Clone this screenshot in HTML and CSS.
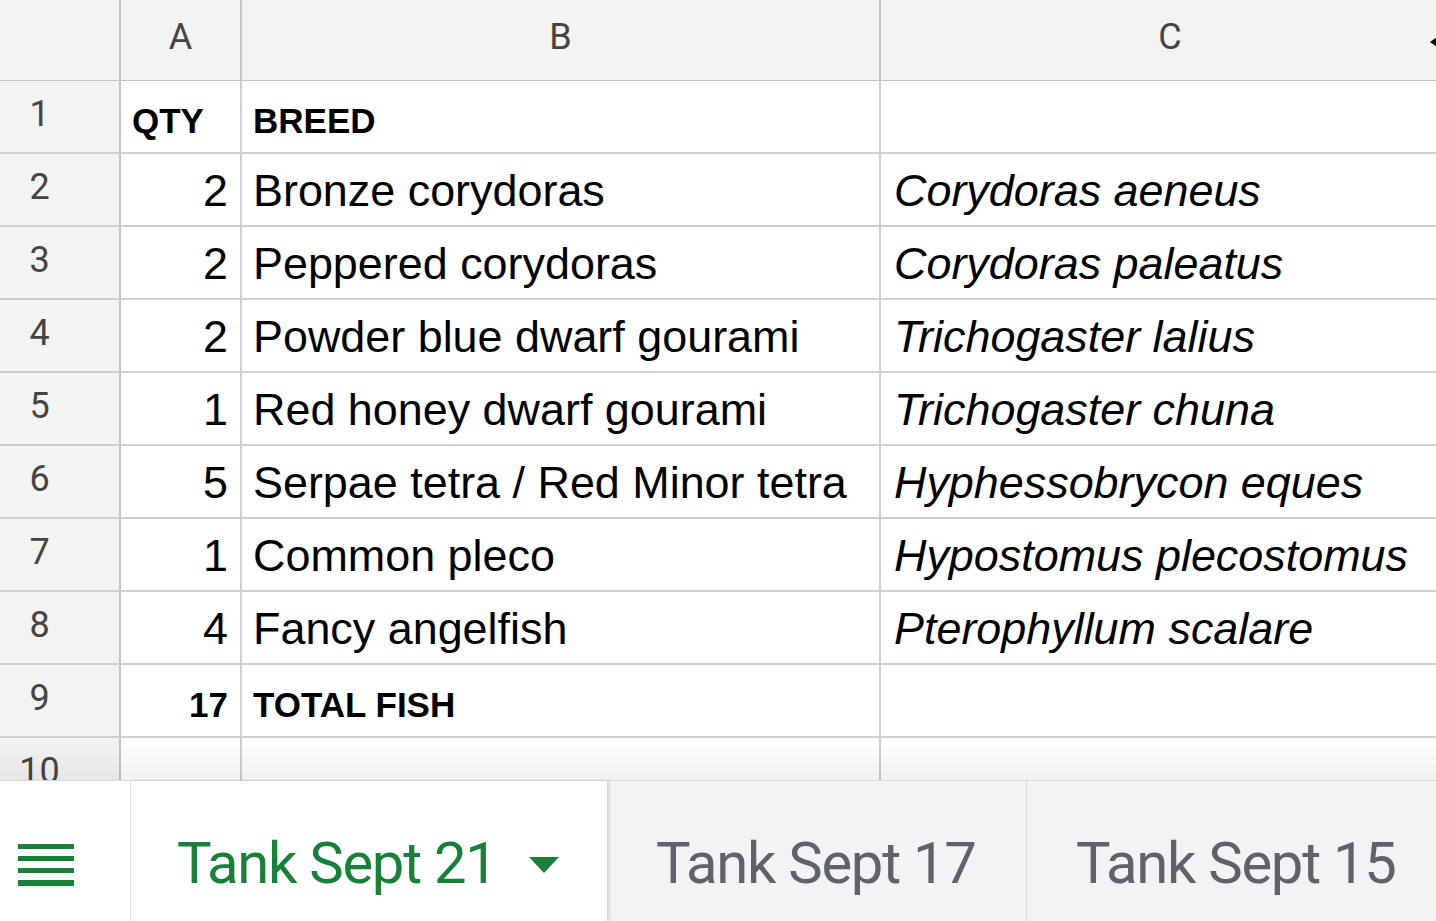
FILE: index.html
```
<!DOCTYPE html>
<html>
<head>
<meta charset="utf-8">
<link rel="stylesheet" href="styles.css">
</head>
<body>
<div class="sheet">
  <div class="grid">
    <div class="corner"></div>
    <div class="ch">A</div>
    <div class="ch">B</div>
    <div class="ch">C</div>

    <div class="rh">1</div>
    <div class="c bold"><span>QTY</span></div>
    <div class="c bold"><span>BREED</span></div>
    <div class="c"></div>

    <div class="rh">2</div>
    <div class="c num">2</div>
    <div class="c">Bronze corydoras</div>
    <div class="c it">Corydoras aeneus</div>

    <div class="rh">3</div>
    <div class="c num">2</div>
    <div class="c">Peppered corydoras</div>
    <div class="c it">Corydoras paleatus</div>

    <div class="rh">4</div>
    <div class="c num">2</div>
    <div class="c">Powder blue dwarf gourami</div>
    <div class="c it">Trichogaster lalius</div>

    <div class="rh">5</div>
    <div class="c num">1</div>
    <div class="c">Red honey dwarf gourami</div>
    <div class="c it">Trichogaster chuna</div>

    <div class="rh">6</div>
    <div class="c num">5</div>
    <div class="c">Serpae tetra / Red Minor tetra</div>
    <div class="c it">Hyphessobrycon eques</div>

    <div class="rh">7</div>
    <div class="c num">1</div>
    <div class="c">Common pleco</div>
    <div class="c it">Hypostomus plecostomus</div>

    <div class="rh">8</div>
    <div class="c num">4</div>
    <div class="c">Fancy angelfish</div>
    <div class="c it">Pterophyllum scalare</div>

    <div class="rh">9</div>
    <div class="c num bold">17</div>
    <div class="c bold">TOTAL FISH</div>
    <div class="c"></div>

    <div class="rh">10</div>
    <div class="c"></div>
    <div class="c"></div>
    <div class="c"></div>
  </div>
  <svg class="scroll-arrow" width="10" height="14" viewBox="0 0 10 14"><polygon points="0,7 10,0 10,14" fill="#000"/></svg>
  <div class="fade"></div>
</div>
<div class="tabbar">
  <div class="menu">
    <svg width="56" height="42" viewBox="0 0 56 42"><rect x="0" y="0" width="56" height="5" fill="#188038"/><rect x="0" y="12" width="56" height="5" fill="#188038"/><rect x="0" y="24" width="56" height="5" fill="#188038"/><rect x="0" y="36" width="56" height="6" fill="#188038"/></svg>
  </div>
  <div class="tab active"><span class="label">Tank Sept 21</span><svg class="caret" width="30" height="16" viewBox="0 0 30 16"><polygon points="0,0 30,0 15,16" fill="#188038"/></svg></div>
  <div class="tab"><span class="label">Tank Sept 17</span></div>
  <div class="tab last"><span class="label">Tank Sept 15</span></div>
</div>
</body>
</html>
```

FILE: styles.css
```
html, body {
  margin: 0;
  padding: 0;
  background: #fff;
  width: 1436px;
  height: 921px;
  overflow: hidden;
}

.sheet {
  position: relative;
  width: 1436px;
  height: 780px;
  overflow: hidden;
}

.grid {
  display: grid;
  grid-template-columns: 121px 121px 639px 580px;
  grid-template-rows: 81px repeat(10, 73px);
  width: 1461px;
}

.corner, .ch {
  background: #f3f3f3;
  border-right: 2px solid #c4c4c4;
  border-bottom: 1px solid #c4c4c4;
  box-sizing: border-box;
}

.ch {
  display: flex;
  align-items: center;
  justify-content: center;
  padding-bottom: 7px;
  font-family: Roboto, "Liberation Sans", sans-serif;
  font-size: 36px;
  color: #444;
}

.rh {
  background: #f3f3f3;
  border-right: 2px solid #c4c4c4;
  border-bottom: 2px solid #cfcfcf;
  box-sizing: border-box;
  display: flex;
  align-items: center;
  justify-content: center;
  padding-right: 40px;
  padding-bottom: 6px;
  font-family: Roboto, "Liberation Sans", sans-serif;
  font-size: 36px;
  color: #444;
}

.c {
  border-right: 2px solid #cfcfcf;
  border-bottom: 2px solid #cfcfcf;
  box-sizing: border-box;
  display: flex;
  align-items: flex-end;
  padding: 0 10px 9px 11px;
  font-family: "Liberation Sans", Arial, sans-serif;
  font-size: 44.9px;
  line-height: 50px;
  color: #000;
  white-space: nowrap;
  overflow: hidden;
}

.c.num {
  justify-content: flex-end;
  padding-right: 12px;
}

.c.bold {
  font-weight: bold;
  font-size: 35px;
  line-height: 39px;
  padding-bottom: 12px;
}

.c.it {
  font-style: italic;
  padding-left: 13px;
}

.scroll-arrow {
  position: absolute;
  right: -4px;
  top: 35px;
}

.fade {
  position: absolute;
  left: 0;
  right: 0;
  bottom: 0;
  height: 42px;
  background: linear-gradient(to bottom, rgba(0,0,0,0), rgba(0,0,0,0.055));
  pointer-events: none;
}

.tabbar {
  display: flex;
  height: 141px;
  background: #f1f3f4;
  border-top: 1px solid #dadce0;
  box-sizing: border-box;
}

.menu {
  width: 130px;
  background: #fff;
  display: flex;
  align-items: flex-start;
  padding: 63px 0 0 18px;
  box-sizing: border-box;
}

.menu svg {
  display: block;
}

.tab {
  display: flex;
  align-items: flex-start;
  padding: 42px 0 0 49px;
  box-sizing: border-box;
  width: 420px;
  border-right: 1px solid #dadce0;
  font-family: Roboto, "Open Sans", sans-serif;
  font-size: 58px;
  line-height: 80px;
  color: #5f6368;
  letter-spacing: -1.3px;
}

.tab.active {
  width: 477px;
  background: #fff;
  border-left: 1px solid #dadce0;
  border-right: none;
  color: #188038;
  padding-left: 46px;
  box-shadow: 2px 0 3px rgba(0,0,0,0.15);
  position: relative;
}

.tab.last {
  flex: 1;
  border-right: none;
}

.caret {
  margin: 34px 0 0 32px;
}
```
